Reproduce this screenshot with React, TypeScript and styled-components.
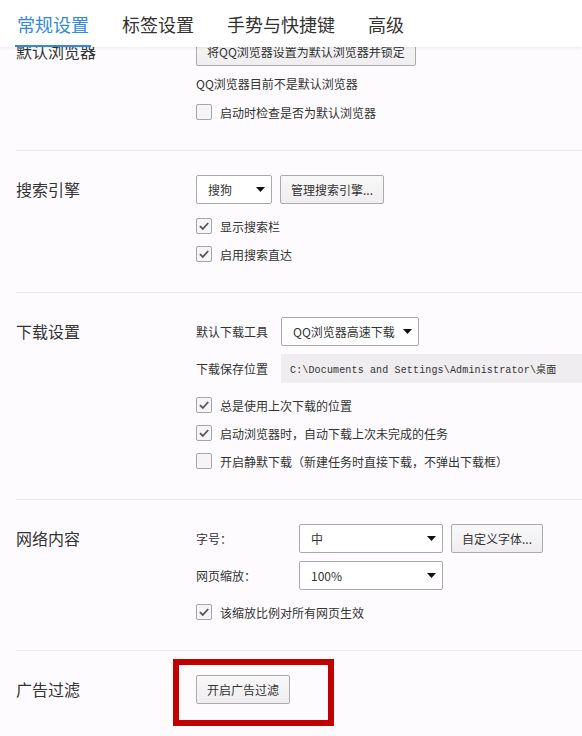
import React, { useEffect, useRef } from 'react';
import styled, { createGlobalStyle } from 'styled-components';

const GlobalStyle = createGlobalStyle`
  html, body, #root {
    height: 100%;
  }
  body {
    margin: 0;
    background: #fdfbfd;
    color: #333;
    font-family: "Noto Sans CJK SC", "Noto Sans", sans-serif;
  }
`;

const Page = styled.div`
  display: flex;
  flex-direction: column;
  height: 100vh;
`;

const TabBar = styled.div`
  position: relative;
  z-index: 1;
  flex: none;
  display: flex;
  align-items: stretch;
  gap: 29px;
  height: 47px;
  padding-left: 15px;
  background: #fff;
  box-shadow: 0 1px 3px rgba(0, 0, 0, 0.08);
`;

const Tab = styled.div<{ $active?: boolean }>`
  display: flex;
  align-items: center;
  box-sizing: border-box;
  padding: 2px 2px 0;
  font-size: 18px;
  color: ${p => (p.$active ? '#2f8ae0' : '#333')};
  border-bottom: 2px solid ${p => (p.$active ? '#2f8ae0' : 'transparent')};
  cursor: pointer;
`;

const Scroller = styled.div`
  flex: 1;
  overflow: hidden;
`;

const List = styled.div`
  padding-bottom: 20px;
`;

const Section = styled.section`
  display: flex;
  margin-left: 16px;
  padding: 24px 0;
  border-top: 1px solid #ebe9eb;

  &:first-child {
    border-top: none;
  }
`;

const SectionLabel = styled.div`
  flex: none;
  width: 180px;
  font-size: 16px;
  line-height: 29px;
  color: #333;
`;

const Controls = styled.div<{ $gap?: number }>`
  display: flex;
  flex-direction: column;
  align-items: flex-start;
  gap: ${p => p.$gap ?? 8}px;
`;

const Row = styled.div`
  display: flex;
  align-items: center;
  gap: 8px;
  height: 29px;
`;

const FieldLabel = styled.div<{ $width: number }>`
  flex: none;
  width: ${p => p.$width}px;
  font-size: 12px;
  color: #333;
`;

const Button = styled.button`
  flex: none;
  height: 29px;
  padding: 0 10px;
  border: 1px solid #ababab;
  border-radius: 2px;
  background: linear-gradient(#f9f8f9, #efedef);
  font-family: inherit;
  font-size: 12px;
  color: #333;
  cursor: pointer;
`;

const SelectBox = styled.div<{ $width: number }>`
  flex: none;
  display: flex;
  align-items: center;
  justify-content: space-between;
  box-sizing: border-box;
  width: ${p => p.$width}px;
  height: 29px;
  padding: 0 6px 0 11px;
  border: 1px solid #a9a9a9;
  border-radius: 2px;
  background: #fff;
  font-size: 12px;
  color: #333;
`;

const PathField = styled.div`
  flex: none;
  display: flex;
  align-items: center;
  box-sizing: border-box;
  width: 330px;
  height: 29px;
  padding-left: 9px;
  background: #efedef;
  font-family: "Liberation Mono", "Noto Sans CJK SC", monospace;
  font-size: 10px;
  letter-spacing: 0.15px;
  color: #333;
  white-space: nowrap;
`;

const CheckList = styled.div`
  display: flex;
  flex-direction: column;
`;

const CheckRow = styled.label`
  display: flex;
  align-items: center;
  gap: 8px;
  height: 28px;
  font-size: 12px;
  color: #333;
`;

const Box = styled.span`
  flex: none;
  display: flex;
  align-items: center;
  justify-content: center;
  box-sizing: border-box;
  width: 16px;
  height: 16px;
  border: 1px solid #a5a5a5;
  border-radius: 2px;
  background: #f6f4f6;
`;

const Note = styled.div`
  height: 28px;
  line-height: 28px;
  font-size: 12px;
  color: #333;
`;

const Highlight = styled.div`
  position: relative;

  &::after {
    content: '';
    position: absolute;
    top: -16px;
    left: -23px;
    right: -44px;
    bottom: -22px;
    border: 6px solid #c20000;
    pointer-events: none;
  }
`;

function Caret() {
  return (
    <svg width="9" height="5" viewBox="0 0 9 5">
      <path d="M0 0 H9 L4.5 5 Z" fill="#111" />
    </svg>
  );
}

function Select({ value, width }: { value: string; width: number }) {
  return (
    <SelectBox $width={width}>
      <span>{value}</span>
      <Caret />
    </SelectBox>
  );
}

function Check({ checked, label }: { checked?: boolean; label: string }) {
  return (
    <CheckRow>
      <Box>
        {checked && (
          <svg width="12" height="12" viewBox="0 0 12 12">
            <path d="M2 6.2 L4.8 9 L10.2 3" fill="none" stroke="#555" strokeWidth="1.8" />
          </svg>
        )}
      </Box>
      {label}
    </CheckRow>
  );
}

const tabs = ['常规设置', '标签设置', '手势与快捷键', '高级'];

function App() {
  const scrollRef = useRef<HTMLDivElement>(null);

  useEffect(() => {
    // the panel is shown scrolled a little past the first section's top
    if (scrollRef.current) scrollRef.current.scrollTop = 34;
  }, []);

  return (
    <Page>
      <GlobalStyle />
      <TabBar>
        {tabs.map((t, i) => (
          <Tab key={t} $active={i === 0}>{t}</Tab>
        ))}
      </TabBar>

      <Scroller ref={scrollRef}>
        <List>
          <Section>
            <SectionLabel>默认浏览器</SectionLabel>
            <Controls $gap={4}>
              <Button>将QQ浏览器设置为默认浏览器并锁定</Button>
              <CheckList>
                <Note>QQ浏览器目前不是默认浏览器</Note>
                <Check label="启动时检查是否为默认浏览器" />
              </CheckList>
            </Controls>
          </Section>

          <Section>
            <SectionLabel>搜索引擎</SectionLabel>
            <Controls>
              <Row>
                <Select value="搜狗" width={76} />
                <Button>管理搜索引擎...</Button>
              </Row>
              <CheckList>
                <Check checked label="显示搜索栏" />
                <Check checked label="启用搜索直达" />
              </CheckList>
            </Controls>
          </Section>

          <Section>
            <SectionLabel>下载设置</SectionLabel>
            <Controls>
              <Row>
                <FieldLabel $width={77}>默认下载工具</FieldLabel>
                <Select value="QQ浏览器高速下载" width={138} />
              </Row>
              <Row>
                <FieldLabel $width={77}>下载保存位置</FieldLabel>
                <PathField>C:\Documents and Settings\Administrator\桌面</PathField>
              </Row>
              <CheckList>
                <Check checked label="总是使用上次下载的位置" />
                <Check checked label="启动浏览器时，自动下载上次未完成的任务" />
                <Check label="开启静默下载（新建任务时直接下载，不弹出下载框）" />
              </CheckList>
            </Controls>
          </Section>

          <Section>
            <SectionLabel>网络内容</SectionLabel>
            <Controls>
              <Row>
                <FieldLabel $width={95}>字号：</FieldLabel>
                <Select value="中" width={144} />
                <Button>自定义字体...</Button>
              </Row>
              <Row>
                <FieldLabel $width={95}>网页缩放：</FieldLabel>
                <Select value="100%" width={144} />
              </Row>
              <CheckList>
                <Check checked label="该缩放比例对所有网页生效" />
              </CheckList>
            </Controls>
          </Section>

          <Section>
            <SectionLabel>广告过滤</SectionLabel>
            <Controls>
              <Highlight>
                <Button>开启广告过滤</Button>
              </Highlight>
            </Controls>
          </Section>
        </List>
      </Scroller>
    </Page>
  );
}

export default App;
